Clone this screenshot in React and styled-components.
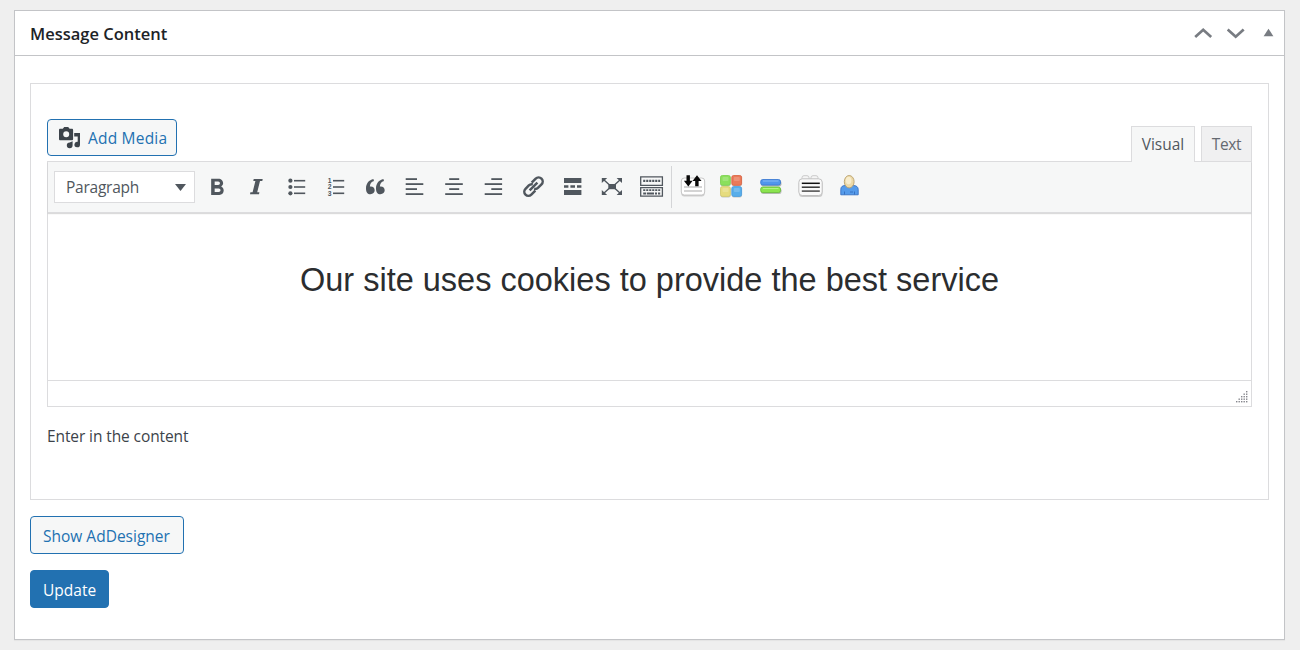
import React from 'react';
import styled, { createGlobalStyle } from 'styled-components';
import { MdFormatBold } from 'react-icons/md';

const GlobalStyle = createGlobalStyle`
   * {
      box-sizing: border-box;
   }

   body {
      margin: 0;
      background: #efefef;
      color: #3c434a;
      font-family: 'Open Sans', 'Noto Sans', sans-serif;
      font-size: 15.5px;
   }
`;

const PageStyled = styled.div`
   height: 650px;
   padding: 10px 15px 10px 14px;
   overflow: hidden;
`;

const PostboxStyled = styled.section`
   height: 630px;
   background: #fff;
   border: 1px solid #c3c4c7;
   box-shadow: 0 1px 1px rgba(0, 0, 0, 0.04);
`;

const HeaderStyled = styled.header`
   display: flex;
   justify-content: space-between;
   align-items: center;
   height: 45px;
   padding: 0 10px 0 15px;
   border-bottom: 1px solid #c3c4c7;
`;

const TitleStyled = styled.h2`
   margin: 0;
   padding-top: 1px;
   color: #1d2327;
   font-size: 16.5px;
   font-weight: 600;
   line-height: 22px;
`;

const HandleStyled = styled.div`
   display: flex;
   align-items: center;
   color: #787c82;

   svg {
      display: block;
   }
`;

const BodyStyled = styled.div`
   display: flex;
   flex-direction: column;
   align-items: flex-start;
   gap: 16px;
   padding: 27px 15px 0;
`;

const FieldStyled = styled.div`
   width: 1239px;
   height: 417px;
   padding: 35px 16px 0;
   border: 1px solid #dcdcde;
`;

const EditorToolsStyled = styled.div`
   display: flex;
   justify-content: space-between;
   height: 42px;
`;

const Button = styled.button`
   display: flex;
   align-items: center;
   width: ${(props) => props.$width}px;
   height: ${(props) => props.$height || 38}px;
   padding: 1px 0 0 ${(props) => props.$indent || 12}px;
   border: 1px solid #2271b1;
   border-radius: 4px;
   background: ${(props) => (props.$primary ? '#2271b1' : '#f6f7f7')};
   color: ${(props) => (props.$primary ? '#fff' : '#2271b1')};
   font-family: inherit;
   font-size: 15.5px;
   letter-spacing: ${(props) => props.$spacing || 0}px;
   white-space: nowrap;

   svg {
      flex: none;
      margin-right: 7px;
   }
`;

const TabsStyled = styled.div`
   display: flex;
   gap: 6px;
   padding-top: 7px;
`;

const TabStyled = styled.button`
   width: ${(props) => props.$width}px;
   height: ${(props) => (props.$active ? 36 : 35)}px;
   padding: 0 0 ${(props) => (props.$active ? 2 : 1)}px;
   border: 1px solid #dcdcde;
   border-bottom: 0;
   background: ${(props) => (props.$active ? '#f6f7f7' : '#f0f0f1')};
   color: ${(props) => (props.$active ? '#50575e' : '#646970')};
   font-family: inherit;
   font-size: 15.5px;
   letter-spacing: ${(props) => props.$spacing || 0}px;
   position: relative;
   z-index: 1;
`;

const EditorStyled = styled.div`
   display: flex;
   flex-direction: column;
   height: 246px;
   border: 1px solid #dcdcde;
`;

const ToolbarStyled = styled.div`
   display: flex;
   flex: none;
   height: 51px;
   padding: 4px 0 0 6px;
   background: #f6f7f7;
   border-bottom: 1px solid #dcdcde;
   box-shadow: 0 1px 1px rgba(0, 0, 0, 0.14);
`;

const SelectStyled = styled.div`
   display: flex;
   justify-content: space-between;
   align-items: center;
   width: 141px;
   height: 32px;
   margin: 5px 2px 0 0;
   padding: 0 8px 0 11px;
   border: 1px solid #dcdcde;
   background: #fff;
   color: #50575e;
   letter-spacing: -0.25px;
`;

const ButtonGroupStyled = styled.div`
   display: flex;
   color: #50575e;

   &:last-child {
      border-left: 1px solid #d4d5d7;
      height: 42px;
   }
`;

const ToolButtonStyled = styled.button`
   display: flex;
   align-items: flex-start;
   width: 39px;
   height: 42px;
   padding: 1px 0 0;
   border: 0;
   background: none;
   color: inherit;

   &:nth-child(even) {
      width: 40px;
   }

   svg {
      flex: none;
      overflow: visible;
   }
`;

const BoldIcon = styled(MdFormatBold)`
   margin: 7px 0 0 6px;
`;

const ContentStyled = styled.div`
   flex: 1;
   padding-top: 46px;
   text-align: center;
`;

const HeadlineStyled = styled.p`
   margin: 0;
   color: #2b2d2f;
   font-family: 'Liberation Sans', Arial, sans-serif;
   font-size: 32.5px;
   line-height: 42px;
`;

const StatusBarStyled = styled.div`
   display: flex;
   justify-content: flex-end;
   align-items: flex-end;
   height: 26px;
   padding: 0 3px 3px 0;
   border-top: 1px solid #dcdcde;
`;

const DescriptionStyled = styled.p`
   margin: 18px 0 0;
   line-height: 22px;
   letter-spacing: -0.1px;
`;

const Tool = ({ children, ...rest }) => (
   <svg width='40' height='40' viewBox='0 0 40 40' fill='currentColor' {...rest}>
      {children}
   </svg>
);

const Bars = ({ rows }) => (
   <Tool>
      {rows.map(([x, width], index) => (
         <rect key={index} x={x} y={11.2 + index * 5} width={width} height='1.8' />
      ))}
   </Tool>
);

const ItalicIcon = () => (
   <Tool>
      <path d='M17.7 12h9l-.4 1.900h-2.300l-2.800 11.400h2.200l-.4 1.900h-9l.4-1.900h2.200l2.800-11.400h-2.100z' />
   </Tool>
);

const BulletListIcon = () => (
   <Tool>
      {[13.7, 20, 26.3].map((y) => (
         <g key={y}>
            <circle cx='14.4' cy={y} r='2.1' />
            <rect x='18' y={y - 0.8} width='11.2' height='1.6' />
         </g>
      ))}
   </Tool>
);

const NumberListIcon = () => (
   <Tool>
      {[13.7, 20, 26.3].map((y, index) => (
         <g key={y}>
            <text x='12.8' y={y + 2.4} fontSize='6.8' fontWeight='600'>
               {index + 1}
            </text>
            <rect x='18' y={y - 0.8} width='11.2' height='1.6' />
         </g>
      ))}
   </Tool>
);

const QuoteIcon = () => (
   <Tool>
      {[11, 21].map((x) => (
         <path
            key={x}
            transform={`translate(${x} 12)`}
            d='M7.4 0C3.1.9 0 4.3 0 9.4c0 3.6 1.5 5.8 4.4 5.8 2.6 0 4.3-1.6 4.3-3.9 0-2.4-1.5-3.8-3.9-3.8-.3 0-.6 0-.9.1C3.9 5 5.3 2.8 8 2z'
         />
      ))}
   </Tool>
);

const LinkIcon = () => (
   <Tool fill='none' stroke='currentColor' strokeWidth='2.5'>
      <g transform='translate(20.5 19.6) rotate(-45)'>
         <path d='M-1.5 4.1H-7.2a4.1 4.1 0 0 1 0-8.2H-2.5a4.1 4.1 0 0 1 3.6 2.1' />
         <path d='M1.5 -4.1H7.2a4.1 4.1 0 0 1 0 8.2H2.5a4.1 4.1 0 0 1-3.6-2.1' />
         <path d='M-5.5 0H5.5' />
      </g>
   </Tool>
);

const MoreIcon = () => (
   <Tool>
      <path d='M12 11h17.4v4.9H12zM12 23h17.4v4.9H12zM12 18.3h4.4v2.4H12zM18.4 18.3h4.6v2.4h-4.6zM25 18.3h4.4v2.4H25z' />
   </Tool>
);

const FullscreenIcon = () => (
   <Tool>
      <rect x='16.3' y='17' width='7.7' height='5.2' />
      <path d='M9.8 11h5.4l-5.4 5zM30 11h-5.4l5.4 5zM9.8 28h5.4l-5.400-5zM30 28h-5.4l5.4-5z' />
      <path
         d='M11.5 12.5l5.5 5M28.5 12.5l-5.5 5M11.5 26.5l5.5-5M28.5 26.5l-5.5-5'
         stroke='currentColor'
         strokeWidth='1.4'
      />
   </Tool>
);

const KeyboardIcon = () => (
   <Tool fill='none' stroke='currentColor'>
      <path d='M9.7 9.9h21.7v8.5H9.7zM9.7 20.6h21.7v8.6H9.7z' strokeWidth='1.3' />
      <path d='M12.2 13.9h17' strokeWidth='2.2' strokeDasharray='2.1 .9' />
      <path d='M12.2 23.2h17' strokeWidth='1.7' strokeDasharray='2.1 .9' />
      <path d='M12.2 26.5h3M16 26.5h7M24 26.5h2M27 26.5h2.2' strokeWidth='1.8' />
   </Tool>
);

const ImportIcon = () => (
   <Tool>
      <rect x='9.3' y='11.5' width='23.4' height='18' rx='3' fill='#cfcfcf' />
      <rect x='9.3' y='11' width='23.4' height='17' rx='3' fill='#fff' stroke='#c2c2c2' strokeWidth='.9' />
      <path d='M12 20h18M12 24h18' stroke='#a9a9a9' strokeWidth='1.2' />
      <path
         d='M14.5 8.3h3.4v5.5h2.7l-4.3 5.6-4.4-5.6h2.6zM23.2 19.2h3.4v-5.3h2.9l-4.5-5.7-4.5 5.7h2.7z'
         fill='#080808'
      />
   </Tool>
);

const BLOCKS = [
   { x: 9.5, y: 8.5, fill: '#8be05c', stroke: '#79cf4b' },
   { x: 20.8, y: 8.5, fill: '#ea7a59', stroke: '#d9603e' },
   { x: 9.5, y: 19.6, fill: '#e6dc7e', stroke: '#d3c96c' },
   { x: 20.8, y: 19.6, fill: '#58aeea', stroke: '#459be0' },
];

const BlocksIcon = () => (
   <Tool>
      {BLOCKS.map(({ x, y, fill, stroke }) => (
         <g key={fill}>
            <rect x={x} y={y + 0.6} width='10.2' height='10.2' rx='2' fill='#c4c7c4' />
            <rect x={x} y={y} width='9.8' height='9.8' rx='1.8' fill={fill} stroke={stroke} strokeWidth='.8' />
            <rect x={x + 2} y={y + 1.5} width='6' height='4' rx='1' fill='#fff' opacity='.18' />
         </g>
      ))}
   </Tool>
);

const StackIcon = () => (
   <Tool>
      <rect x='10' y='13.5' width='20.5' height='6' rx='2.2' fill='#b9bdb9' />
      <rect x='10' y='21' width='20.5' height='6' rx='2.2' fill='#b9bdb9' />
      <rect x='9.7' y='12.5' width='19.8' height='5.6' rx='2' fill='#5196ec' stroke='#3474cf' strokeWidth='.8' />
      <rect x='9.7' y='20' width='19.8' height='5.6' rx='2' fill='#8be44f' stroke='#62bd30' strokeWidth='.8' />
      <path d='M12 14h15.5' stroke='#86b9f6' />
      <path d='M12 21.5h15.5' stroke='#b4f484' />
   </Tool>
);

const PanelIcon = () => (
   <Tool>
      <rect x='9' y='12.5' width='23.5' height='17.5' rx='3.5' fill='#c9c9c9' />
      <rect x='12' y='8.7' width='7' height='5' rx='2' fill='#f5f5f5' stroke='#cacaca' />
      <rect x='21' y='8.7' width='7' height='5' rx='2' fill='#f5f5f5' stroke='#cacaca' />
      <rect x='8.8' y='11.8' width='23.4' height='16.7' rx='3.5' fill='#fafafa' stroke='#bcbcbc' strokeWidth='.9' />
      <path d='M11.8 16.3h18' stroke='#111' strokeWidth='1.5' />
      <path d='M11.8 20.2h18' stroke='#333' strokeWidth='1.5' />
      <path d='M11.8 24.1h18' stroke='#4a4a4a' strokeWidth='1.5' />
   </Tool>
);

const UserIcon = () => (
   <Tool>
      <path
         d='M10.8 27.8v-5.3c0-2.6 1.5-4 4.5-4h8c3 0 4.9 1.4 4.9 4v5.3z'
         fill='#559bea'
         stroke='#356fc4'
         strokeWidth='.9'
      />
      <path d='M14.5 24.5v3M24.5 24.5v3M20 25h3' stroke='#346dbd' strokeWidth='.9' />
      <ellipse cx='19.2' cy='14.7' rx='4.9' ry='6.2' fill='#ecd9a8' stroke='#b9a06c' strokeWidth='.9' />
      <ellipse cx='18.6' cy='13.5' rx='2.8' ry='3.7' fill='#f8edcd' />
   </Tool>
);

const MediaIcon = () => (
   <svg width='22' height='22' viewBox='0 0 22 22' fill='#3c434a'>
      <path
         fillRule='evenodd'
         d='M3.8 1.8L5.2 0h4l1.400 1.800h2.200c.8 0 1.300.5 1.300 1.300v8.900c0 .8-.5 1.300-1.300 1.300H1.300C.5 13.300 0 12.800 0 12V3.100C0 2.300.5 1.800 1.300 1.800zM7.200 4.300a3 3 0 1 0 0 6 3 3 0 0 0 0-6z'
      />
      <path d='M15.2 6H21v11.500a2.800 2.800 0 1 1-2.300-2.700V9.500h-3.500zM13.600 14.300v4a2.900 2.900 0 1 1-2.900-2.900z' />
   </svg>
);

const FORMAT_TOOLS = [
   ['Bold', <BoldIcon size={28} />],
   ['Italic', <ItalicIcon />],
   ['Bulleted list', <BulletListIcon />],
   ['Numbered list', <NumberListIcon />],
   ['Blockquote', <QuoteIcon />],
   ['Align left', <Bars rows={[[11.7, 11.3], [11.7, 17.6], [11.7, 11.3], [11.7, 17.6]]} />],
   ['Align center', <Bars rows={[[15.2, 10], [11.2, 17.6], [15.2, 10], [11.2, 17.6]]} />],
   ['Align right', <Bars rows={[[18.3, 10.8], [11.7, 17.4], [18.3, 10.8], [11.7, 17.4]]} />],
   ['Insert link', <LinkIcon />],
   ['Read more', <MoreIcon />],
   ['Fullscreen', <FullscreenIcon />],
   ['Toolbar toggle', <KeyboardIcon />],
];

const PLUGIN_TOOLS = [
   ['Import', <ImportIcon />],
   ['Blocks', <BlocksIcon />],
   ['Stack', <StackIcon />],
   ['Panel', <PanelIcon />],
   ['User', <UserIcon />],
];

const ToolGroup = ({ tools }) => (
   <ButtonGroupStyled>
      {tools.map(([label, icon]) => (
         <ToolButtonStyled key={label} type='button' aria-label={label}>
            {icon}
         </ToolButtonStyled>
      ))}
   </ButtonGroupStyled>
);

const ResizeGrip = () => (
   <svg width='12' height='12' viewBox='0 0 12 12' fill='#85868c'>
      {[0, 1, 2, 3, 4].map((row) =>
         Array.from({ length: row + 1 }, (_, i) => (
            <rect key={`${row}-${i}`} x={10 - i * 2.5} y={row * 2.5} width='1.4' height='1.4' />
         ))
      )}
   </svg>
);

export default function App() {
   return (
      <PageStyled>
         <GlobalStyle />
         <PostboxStyled>
            <HeaderStyled>
               <TitleStyled>Message Content</TitleStyled>
               <HandleStyled>
                  <svg width='80' height='12' viewBox='0 0 80 12'>
                     <path
                        d='M1.2 10L9.2 2.8l8 7.2M33.7 2.6l8 7.2 8-7.2'
                        fill='none'
                        stroke='currentColor'
                        strokeWidth='2.7'
                     />
                     <path d='M74.5 1.8l4.9 7.4h-9.8z' fill='currentColor' />
                  </svg>
               </HandleStyled>
            </HeaderStyled>
            <BodyStyled>
               <FieldStyled>
                  <EditorToolsStyled>
                     <Button type='button' $width={130} $height={37} $indent={11} $spacing={0.2}>
                        <MediaIcon />
                        Add Media
                     </Button>
                     <TabsStyled>
                        <TabStyled type='button' $active $width={64}>
                           Visual
                        </TabStyled>
                        <TabStyled type='button' $width={51} $spacing={-0.3}>
                           Text
                        </TabStyled>
                     </TabsStyled>
                  </EditorToolsStyled>
                  <EditorStyled>
                     <ToolbarStyled>
                        <SelectStyled>
                           Paragraph
                           <svg width='11' height='7' viewBox='0 0 11 7'>
                              <path d='M0 0h11L5.5 7z' fill='#50575e' />
                           </svg>
                        </SelectStyled>
                        <ToolGroup tools={FORMAT_TOOLS} />
                        <ToolGroup tools={PLUGIN_TOOLS} />
                     </ToolbarStyled>
                     <ContentStyled>
                        <HeadlineStyled>
                           Our site uses cookies to provide the best service
                        </HeadlineStyled>
                     </ContentStyled>
                     <StatusBarStyled>
                        <ResizeGrip />
                     </StatusBarStyled>
                  </EditorStyled>
                  <DescriptionStyled>Enter in the content</DescriptionStyled>
               </FieldStyled>
               <Button type='button' $width={154}>
                  Show AdDesigner
               </Button>
               <Button type='submit' $primary $width={79}>
                  Update
               </Button>
            </BodyStyled>
         </PostboxStyled>
      </PageStyled>
   );
}
